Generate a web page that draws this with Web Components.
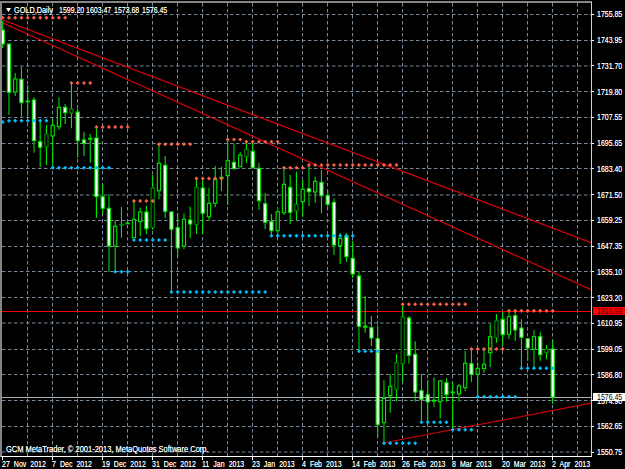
<!DOCTYPE html>
<html lang="en">
<head>
<meta charset="utf-8">
<title>GOLD,Daily</title>
<style>
  html, body { margin: 0; padding: 0; background: #000; }
  body { width: 625px; height: 469px; overflow: hidden; font: 9.2px "Liberation Sans", Arial, sans-serif; color: #fff; }
</style>
</head>
<body>
<mt-window>
  <candle-chart slot="plot">
    <chart-title slot="title" symbol="GOLD,Daily" ohlc="1599.20 1603.47 1573.68 1576.45"></chart-title>
    <chart-note slot="note">GCM MetaTrader, © 2001-2013, MetaQuotes Software Corp.</chart-note>
  </candle-chart>
  <price-axis slot="prices" labels="1755.85 1743.95 1731.70 1719.80 1707.55 1695.65 1683.40 1671.50 1659.25 1647.35 1635.10 1623.20 1610.95 1599.05 1586.80 1574.90 1562.65 1550.75">
    <price-tag slot="tags" kind="level" style="top:306.6px">1616.99</price-tag>
    <price-tag slot="tags" kind="bid" style="top:393.2px">1576.45</price-tag>
  </price-axis>
  <time-axis slot="times" labels="27 Nov 2012|7 Dec 2012|19 Dec 2012|31 Dec 2012|11 Jan 2013|23 Jan 2013|4 Feb 2013|14 Feb 2013|26 Feb 2013|8 Mar 2013|20 Mar 2013|2 Apr 2013"></time-axis>
</mt-window>
<script>
const FONT = '"Liberation Sans", Arial, sans-serif';
const GLOW = 'text-shadow: 0 0 .4px rgba(255,255,255,.8);';
const BAR = i => 2.7 + 6.25 * i;
const LIME = '#00e600', DARK = '#008a00';

/* wickTop, bodyTop, bodyBottom, wickBottom, code: fill(W/B) outline(l/d) wick(l/d) */
const CANDLES = [
[21,30,44,48,'Wll'],[44,44,92.3,115,'Wld'],[73,79,92,96,'Bll'],[66.7,79.3,102.7,116.7,'Wll'],[85,101,101.8,116.7,'Bll'],
[97,100,140.7,152.7,'Wld'],[121.7,141.7,147.3,167,'Wll'],[125,134,146.7,165,'Bdl'],[119,125.3,136,167.7,'Bll'],[97.3,107.3,126.7,130,'Bld'],
[104,107.3,112.7,124,'Wll'],[83.3,109,113,128.3,'Bdl'],[109,112,140.7,157.7,'Wll'],[131.7,140,143.3,156,'Wll'],[134,138.4,139.2,163,'Bll'],
[128.3,138,196.7,217.7,'Wll'],[184,196.7,208.3,214,'Wll'],[194.3,208.3,246,271.7,'Wld'],[220,226.3,246,271,'Bll'],[207,224.3,225.3,237.7,'Bdl'],
[222.5,223,223.8,224,'Bll'],[201,219.3,237.7,237.7,'Bld'],[207.7,212,221.7,236,'Bll'],[206,212,228.7,234,'Wll'],[175,188,227.3,230,'Bdl'],
[145,163.3,190.7,199.3,'Bld'],[156,165.3,211.3,218,'Wll'],[211,212,229.3,292,'Wll'],[212.7,227.7,248,257,'Wll'],[213.3,219.3,246,249.3,'Bld'],
[206.7,220,224,238.3,'Wll'],[178.7,187.3,224.7,234,'Bdl'],[178.7,188,213.3,234,'Wll'],[187.7,203.3,216.7,221,'Bld'],[166,179,203.3,207.3,'Bll'],
[166.7,177.3,178.1,191,'Bll'],[140,160.7,175.7,205,'Bll'],[143.3,162.3,168.7,168.7,'Wld'],[152.3,155,166.7,166.7,'Bll'],[141.7,149.3,156.7,162.7,'Bdl'],
[141.7,151.3,167.7,167.7,'Wll'],[162.7,168.3,200.7,210,'Wld'],[193.3,203.7,222.3,229,'Wll'],[214,221.7,230.7,236.7,'Wll'],[207.3,211.7,230.7,235.7,'Bld'],
[167.7,184.3,212.7,215,'Bld'],[175,187.3,212.3,224,'Wll'],[171.7,204.3,211,220,'Bdl'],[180,189.3,201.7,216.7,'Bll'],[165,188.7,191.7,206,'Wld'],
[176.7,181.3,192,202.7,'Bll'],[170,182.3,195.7,213.3,'Wll'],[190,195.7,204.3,209,'Wll'],[198.3,202.3,245,255,'Wld'],[233.3,238.3,245.7,264,'Bll'],
[233,236,256.7,261.7,'Wll'],[241,258.3,274,278,'Wll'],[271.7,276,326.3,351.3,'Wld'],[296,326,327.2,332.7,'Bll'],[316,327.7,338,346.3,'Wll'],
[325.3,338.7,424.7,437,'Wll'],[380.3,398.3,422.7,443.7,'Bld'],[374.3,386.3,395.7,412.7,'Bll'],[354,362.7,389.3,401.3,'Bdl'],[305,317,363.7,382,'Bdl'],
[316,318,355.3,363.7,'Wld'],[341.3,354.3,392,401.7,'Wll'],[374,390.7,399.3,421.7,'Wll'],[380,394.7,402,422.7,'Wll'],[377.3,400.2,401.2,407.3,'Bld'],
[380,381,401.7,418.3,'Bll'],[378.3,382.7,394.7,401.7,'Wll'],[381.7,392,392.8,430,'Bll'],[384,386,394,401.7,'Bld'],[351,363.3,387.7,391,'Bll'],
[349.3,363.7,374.3,381.7,'Wll'],[362.3,368.3,374.3,396.7,'Bll'],[349,364.3,368.7,372.7,'Bld'],[324,336.7,352.7,367.3,'Bll'],[314,320.7,337.7,342.7,'Bdl'],
[312,319.3,334.7,345.7,'Wll'],[311.7,316.7,334.3,339.3,'Bld'],[310.7,315.7,330,341,'Wll'],[319.3,328,337.3,368.3,'Wll'],[338.3,338.7,348,360.7,'Wll'],
[330,336.7,349.3,368.3,'Bld'],[331.7,336.7,354.7,360.7,'Wll'],[345,349.3,352.7,359.3,'Bdl'],[340,349,397.3,404,'Wll']
];

/* y, first bar, last bar */
const RED_DOTS = [[17.7,0,10],[83,11,14],[127,15,20],[201,21,24],[144.3,25,30],[178.5,31,35],[139.6,36,38],[141.7,39,44],
  [167.7,45,48],[165,49,63],[304.3,64,74],[349,75,80],[310.7,81,88]];
const BLUE_DOTS = [[122,0,0],[120.7,1,7],[167.7,8,17],[271.7,18,20],[240,21,26],[292,27,42],[235.7,43,56],[351.3,57,60],
  [443.3,61,66],[422.3,67,71],[429.7,72,75],[396.7,76,82],[368.3,83,88]];

class MtWindow extends HTMLElement {
  constructor() {
    super();
    this.attachShadow({mode:'open'}).innerHTML = `
      <style>
        :host { display: grid; grid-template-columns: 592px 33px; grid-template-rows: 457px 12px; width: 625px; height: 469px; background: #000; }
        ::slotted([slot=plot])   { grid-column: 1; grid-row: 1; }
        ::slotted([slot=prices]) { grid-column: 2; grid-row: 1 / span 2; }
        ::slotted([slot=times])  { grid-column: 1; grid-row: 2; }
      </style>
      <slot name="plot"></slot><slot name="prices"></slot><slot name="times"></slot>`;
  }
}

class CandleChart extends HTMLElement {
  constructor() {
    super();
    const NS_W = 589, NS_H = 453;
    let g = '';
    /* grid: every fifth row falls between two device rows in the reference and looks dim and thick */
    for (let x = 27.5; x < 591; x += 25) g += `<line x1="${x}" x2="${x}" y1="3" y2="456"/>`;
    for (let k = 0; k < 18; k++) {
      const raw = 14.3 + 25.76 * k;
      const y = k % 5 === 2 ? Math.round(raw) : Math.floor(raw) + .5;
      g += `<line x1="2" x2="591" y1="${y}" y2="${y}"/>`;
    }
    let c = '';
    CANDLES.forEach((d, i) => {
      const [wt, bt, bb, wb, code] = d;
      const x = BAR(i);
      const wick = code[2] === 'l' ? `stroke="${LIME}" stroke-width="1.1"` : `stroke="${DARK}" stroke-width="1.7"`;
      c += `<line x1="${x}" x2="${x}" y1="${wt}" y2="${wb}" ${wick}/>`;
      c += `<rect x="${x - 1.6}" y="${bt}" width="3.2" height="${Math.max(bb - bt, .4)}" fill="${code[0] === 'W' ? '#fff' : '#000'}" stroke="${code[1] === 'l' ? LIME : DARK}" stroke-width="1.1"/>`;
    });
    const dots = (list, col) => {
      let p = '';
      list.forEach(([y, a, b]) => { for (let i = a; i <= b; i++) { const x = BAR(i); p += `M${x - 1.7} ${y}h3.4M${x} ${y - 1.7}v3.4`; } });
      return `<path d="${p}" stroke="${col}" stroke-width="1.5" fill="none"/>`;
    };
    this.attachShadow({mode:'open'}).innerHTML = `
      <style>
        :host { display: block; box-sizing: border-box; padding-top: 1px; height: 457px; }
        .frame { position: relative; box-sizing: border-box; height: 456px; border: solid; border-width: 2px 1px 1px 2px; border-color: #858585 #cfcfcf #fff #858585; overflow: hidden; background: #000; }
        svg { display: block; }
      </style>
      <div class="frame">
        <svg width="${NS_W}" height="${NS_H}" viewBox="2 3 ${NS_W} ${NS_H}" xmlns="http://www.w3.org/2000/svg">
          <g stroke="#778899" stroke-width="1" stroke-dasharray="3.5 2.5" fill="none">${g}</g>
          <line x1="2" x2="591" y1="397.5" y2="397.5" stroke="#aab2bc"/>
          <line x1="2" x2="591" y1="311.5" y2="311.5" stroke="#f00000"/>
          ${c}
          <g fill="none" stroke-width="1.15">
            <line x1="3" y1="20" x2="592" y2="243" stroke="#e6000c"/>
            <line x1="3" y1="23" x2="592" y2="290" stroke="#e6000c"/>
            <line x1="383" y1="443" x2="592" y2="403" stroke="#c8000a"/>
          </g>
          ${dots(RED_DOTS, '#ff6347')}
          ${dots(BLUE_DOTS, '#00bfff')}
        </svg>
        <slot name="title"></slot>
        <slot name="note"></slot>
      </div>`;
  }
}

class ChartTitle extends HTMLElement {
  constructor() {
    super();
    const nums = this.getAttribute('ohlc').split(' ').map(n => `<span class="n">${n}</span>`).join('');
    this.attachShadow({mode:'open'}).innerHTML = `
      <style>
        :host { position: absolute; left: 4px; top: 1px; display: flex; align-items: center; height: 11px; color: #fff; font: 9.2px ${FONT}; white-space: nowrap; ${GLOW} }
        svg { display: block; margin-right: 3px; flex: none; }
        .sym { width: 44.6px; flex: none; display: block; transform: scaleX(.795); transform-origin: 0 50%; }
        .nums { display: flex; gap: 2.9px; }
        .n { width: 25px; flex: none; display: block; transform: scaleX(.76); transform-origin: 0 50%; }
      </style>
      <svg width="5" height="4" viewBox="0 0 5 4"><path d="M0 0h5L2.5 4z" fill="#fff"/></svg>
      <span class="sym">${this.getAttribute('symbol')}</span>
      <span class="nums">${nums}</span>`;
  }
}

class ChartNote extends HTMLElement {
  constructor() {
    super();
    this.attachShadow({mode:'open'}).innerHTML = `
      <style>
        :host { position: absolute; left: 4px; bottom: 1px; color: #fff; font: 9.2px/11px ${FONT}; white-space: nowrap; transform: scaleX(.817); transform-origin: 0 50%; ${GLOW} }
      </style><slot></slot>`;
  }
}

class PriceAxis extends HTMLElement {
  constructor() {
    super();
    const rows = this.getAttribute('labels').split(' ').map(p => `<div class="row"><i></i><span>${p}</span></div>`).join('');
    this.attachShadow({mode:'open'}).innerHTML = `
      <style>
        :host { display: block; position: relative; height: 469px; color: #fff; font: 9.2px ${FONT}; ${GLOW} }
        .rows { padding-top: 1.42px; display: flex; flex-direction: column; }
        .row { height: 25.76px; display: flex; align-items: center; white-space: nowrap; }
        i { width: 2px; height: 1px; background: #fff; margin-right: 3px; flex: none; }
        span { display: block; width: 25px; flex: none; transform: scaleX(.76); transform-origin: 0 50%; }
      </style>
      <div class="rows">${rows}</div>
      <slot name="tags"></slot>`;
  }
}

class PriceTag extends HTMLElement {
  constructor() {
    super();
    const bid = this.getAttribute('kind') === 'bid';
    this.attachShadow({mode:'open'}).innerHTML = `
      <style>
        :host { position: absolute; left: 1px; right: 0; height: ${bid ? 7.5 : 8.4}px; background: ${bid ? '#fff' : '#f00'}; color: ${bid ? '#000' : '#4a0000'}; display: flex; align-items: center; padding-left: 4px; font: 9.2px ${FONT}; overflow: hidden; text-shadow: none; }
        span { display: block; width: 25px; flex: none; white-space: nowrap; transform: scaleX(.76); transform-origin: 0 50%; }
      </style><span><slot></slot></span>`;
  }
}

class TimeAxis extends HTMLElement {
  constructor() {
    super();
    const cols = this.getAttribute('labels').split('|').map(t => `<div class="col"><i></i><span>${t}</span></div>`).join('');
    this.attachShadow({mode:'open'}).innerHTML = `
      <style>
        :host { display: flex; height: 12px; padding-left: 2px; color: #fff; font: 9.2px ${FONT}; ${GLOW} }
        .col { position: relative; width: 50px; flex: none; height: 12px; white-space: nowrap; }
        i { position: absolute; left: 0; top: 0; width: 1px; height: 3px; background: #fff; }
        span { display: block; width: 42px; padding-top: 2px; line-height: 10px; word-spacing: 2.8px; transform: scaleX(.76); transform-origin: 0 50%; }
      </style>${cols}`;
  }
}

customElements.define('mt-window', MtWindow);
customElements.define('candle-chart', CandleChart);
customElements.define('chart-title', ChartTitle);
customElements.define('chart-note', ChartNote);
customElements.define('price-axis', PriceAxis);
customElements.define('price-tag', PriceTag);
customElements.define('time-axis', TimeAxis);
</script>
</body>
</html>
